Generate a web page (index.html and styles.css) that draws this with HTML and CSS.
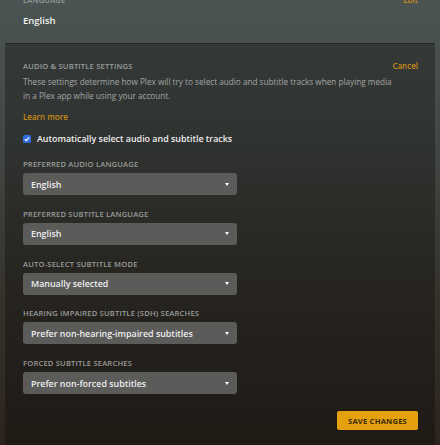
FILE: index.html
```html
<!DOCTYPE html>
<html>
<head>
<meta charset="utf-8">
<link rel="stylesheet" href="styles.css">
</head>
<body>
<div class="page">
  <section class="summary">
    <div class="row-head">
      <span class="caps">Language</span>
      <a class="link">Edit</a>
    </div>
    <div class="value">English</div>
  </section>
  <section class="panel">
    <div class="row-head">
      <span class="caps">Audio &amp; Subtitle Settings</span>
      <a class="link">Cancel</a>
    </div>
    <p class="desc">These settings determine how Plex will try to select audio and subtitle tracks when playing media in a Plex app while using your account.</p>
    <a class="link learn">Learn more</a>
    <label class="check">
      <span class="box"><svg viewBox="0 0 8 8" width="8" height="8"><path d="M1.8 4.2 L3.3 5.6 L6.2 2.3" fill="none" stroke="#fff" stroke-width="1.2"/></svg></span>
      Automatically select audio and subtitle tracks
    </label>
    <div class="field">
      <div class="caps">Preferred Audio Language</div>
      <div class="select"><span>English</span><i class="caret"></i></div>
    </div>
    <div class="field">
      <div class="caps">Preferred Subtitle Language</div>
      <div class="select"><span>English</span><i class="caret"></i></div>
    </div>
    <div class="field">
      <div class="caps">Auto-Select Subtitle Mode</div>
      <div class="select"><span>Manually selected</span><i class="caret"></i></div>
    </div>
    <div class="field">
      <div class="caps">Hearing Impaired Subtitle (SDH) Searches</div>
      <div class="select"><span>Prefer non-hearing-impaired subtitles</span><i class="caret"></i></div>
    </div>
    <div class="field">
      <div class="caps">Forced Subtitle Searches</div>
      <div class="select"><span>Prefer non-forced subtitles</span><i class="caret"></i></div>
    </div>
    <div class="actions">
      <button class="save">Save Changes</button>
    </div>
  </section>
</div>
</body>
</html>
```
FILE: styles.css
```css
html, body {
  margin: 0;
  height: 100%;
}
body {
  font-family: "Open Sans", "Liberation Sans", sans-serif;
  background: linear-gradient(to bottom, #4b5453 0%, #434845 30%, #37352f 60%, #2c241d 100%);
  color: #eee;
  overflow: hidden;
}
.page {
  height: 445px;
  display: flex;
  flex-direction: column;
}
.summary {
  padding: 0 22px 0 23px;
  margin-top: -6px;
}
.row-head {
  display: flex;
  justify-content: space-between;
  align-items: center;
}
.caps {
  font-size: 7.6px;
  font-weight: 600;
  text-transform: uppercase;
  letter-spacing: 0.18px;
  color: #9a9c9a;
  line-height: 12px;
}
.link {
  color: #cc8b13;
  font-size: 8px;
  font-weight: 600;
  line-height: 12px;
}
.value {
  font-size: 9.5px;
  font-weight: 600;
  color: #f2f2f2;
  margin-top: 8px;
  line-height: 14px;
}
.panel {
  flex: 1;
  margin: 15px 5px 0 5px;
  background: rgba(0, 0, 0, 0.28);
  border-top: 1px solid rgba(0, 0, 0, 0.35);
  padding: 16px 17px 0 18px;
}
.desc {
  margin: 3px 0 0;
  font-size: 8.2px;
  line-height: 14px;
  color: #a4a6a4;
  font-weight: 500;
  padding-right: 20px;
}
.learn {
  display: block;
  margin-top: 8px;
}
.check {
  display: flex;
  align-items: center;
  gap: 6px;
  margin-top: 9px;
  font-size: 8.9px;
  font-weight: 600;
  color: #eee;
  line-height: 14px;
}
.box {
  width: 8px;
  height: 8px;
  background: #2f6de0;
  border-radius: 1.5px;
  display: flex;
}
.field {
  margin-top: 12.8px;
}
.check + .field {
  margin-top: 12px;
}
.field .caps {
  margin-bottom: 3px;
}
.select {
  width: 214px;
  height: 22px;
  box-sizing: border-box;
  background: #5b5b5a;
  border-radius: 3px;
  display: flex;
  align-items: center;
  justify-content: space-between;
  padding: 0 8px 0 8px;
  font-size: 8.9px;
  font-weight: 600;
  color: #eee;
}
.caret {
  width: 0;
  height: 0;
  border-left: 2.5px solid transparent;
  border-right: 2.5px solid transparent;
  border-top: 3px solid #fff;
}
.actions {
  display: flex;
  justify-content: flex-end;
  margin-top: 17px;
}
.save {
  background: #e5a00d;
  border: none;
  border-radius: 2px;
  color: #3a2a08;
  font-family: inherit;
  font-weight: 700;
  font-size: 7.6px;
  letter-spacing: 0.2px;
  text-transform: uppercase;
  height: 19px;
  padding: 0 11px;
}
```
